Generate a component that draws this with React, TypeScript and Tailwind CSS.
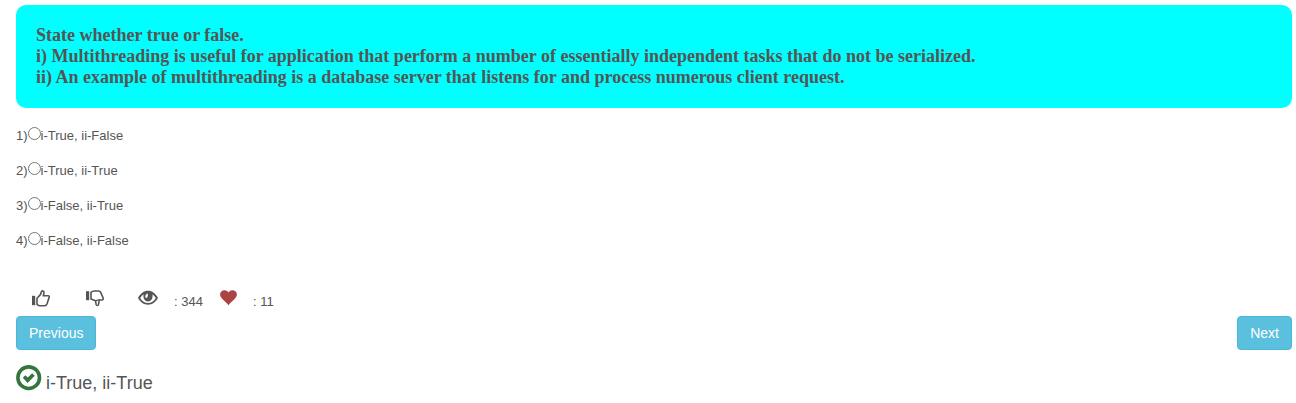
import React, { useState } from "react";

const options = ["i-True, ii-False", "i-True, ii-True", "i-False, ii-True", "i-False, ii-False"];

function ThumbUp() {
  return (
    <svg width="18" height="17" viewBox="0 0 18 17" fill="none" aria-hidden="true">
      <path d="M0 5.8h3.2v9.4H0z" fill="#555" />
      <path
        d="M5 8.2 8.4 4.600 9.600 1.400C10.200.5 12 .9 12 2.400c0 1.200-.5 2.200-.7 3.400h4.900c1.100 0 1.300 1.100.8 1.900l-1.900 6.100c-.5 1.400-1.200 2-2.700 2H8C6.800 15.800 5.900 15.200 5 14.400z"
        stroke="#555"
        strokeWidth="1.6"
        strokeLinejoin="round"
      />
    </svg>
  );
}

function ThumbDown() {
  return (
    <svg width="18" height="17" viewBox="0 0 18 17" fill="none" aria-hidden="true">
      <path d="M0 1.200h3.200v9H0z" fill="#555" />
      <path
        d="M5 2.400C6 1.400 7 1 8.200 1h4.200c1.100 0 1.800.4 2.300 1.400l2.200 4.900c.6 1.300.3 2.700-1.100 2.700h-2.600l-.6 4.200c-.3 1.700-2.100 1.700-2.500.2L9.500 10.700 5 8.900z"
        stroke="#555"
        strokeWidth="1.6"
        strokeLinejoin="round"
      />
      <path d="m9.600 10.700 3.500-.8" stroke="#555" strokeWidth="1.2" />
    </svg>
  );
}

function Eye() {
  return (
    <svg width="20" height="16" viewBox="0 0 20 16" fill="none" aria-hidden="true">
      <path
        fillRule="evenodd"
        d="M0 8C2.400 3.500 5.800.8 10 .8S17.600 3.500 20 8c-2.400 4.300-5.800 6.700-10 6.700S2.400 12.300 0 8zm2.200 0c1.900 3.200 4.500 5 7.800 5s5.900-1.800 7.800-5c-.9-1.500-2-2.800-3.300-3.700C15 8.500 13.200 11.500 10 11.500S5 8.500 5.500 4.300C4.200 5.200 3.100 6.500 2.200 8z"
        fill="#555"
      />
      <path d="M7.200 6.900c0-1.900.8-3.100 2.400-3.500.6 1.500.3 3.100-.5 4.100-.7.800-1.600.6-1.900-.6z" fill="#fff" />
    </svg>
  );
}

function Heart() {
  return (
    <svg width="17" height="16" viewBox="0 0 17 16" aria-hidden="true">
      <path d="M8.500 2.500C9.500.9 10.900.2 12.500.2c2.500 0 4.400 1.900 4.400 4.300 0 3.500-4.600 6-8.400 10.700C4.700 10.500.1 8 .1 4.500.1 2.100 2 .2 4.500.2 6.100.2 7.500.9 8.500 2.500z" fill="#a94442" />
    </svg>
  );
}

function CheckCircle() {
  return (
    <svg className="shrink-0" width="26" height="26" viewBox="0 0 26 26" fill="none" aria-hidden="true">
      <circle cx="12.700" cy="12.700" r="10.800" stroke="#35763e" strokeWidth="3.600" />
      <path d="m6.800 12.800 2.500-2.500 2.500 2.200 4.300-4.300 2.700 2.600-7.200 7.100z" fill="#35763e" />
    </svg>
  );
}

const buttonStyle = "rounded border border-[#46b8da] bg-[#5bc0de] px-3 py-1.5 text-sm leading-5 text-white";

export default function App() {
  const [choice, setChoice] = useState<number | null>(null);

  return (
    <main className="bg-white pt-[5px] pr-1 pl-4 font-['Liberation_Sans',Arial,sans-serif] text-[13px] text-[#555]">
      <h1 className="rounded-[10px] bg-[#00ffff] p-5 font-['Liberation_Serif','Times_New_Roman',serif] text-lg leading-[21px] font-bold">
        State whether true or false.
        <br />
        i) Multithreading is useful for application that perform a number of essentially independent tasks that do not be serialized.
        <br />
        ii) An example of multithreading is a database server that listens for and process numerous client request.
      </h1>

      <div className="flex flex-col pt-[10px]">
        {options.map((option, index) => (
          <label key={option} className="flex h-[35px] items-center">
            <span>{index + 1})</span>
            <input
              type="radio"
              name="answer"
              className="mb-1 size-[13px] shrink-0"
              checked={choice === index}
              onChange={() => setChoice(index)}
            />
            <span>{option}</span>
          </label>
        ))}
      </div>

      <div className="flex items-start pt-8 pl-4">
        <button type="button" aria-label="Like" className="mr-9">
          <ThumbUp />
        </button>
        <button type="button" aria-label="Dislike" className="mr-[34px]">
          <ThumbDown />
        </button>
        <Eye />
        <span className="pt-1 pl-4 leading-4">: 344</span>
        <span className="pl-[17px]">
          <Heart />
        </span>
        <span className="pt-1 pl-4 leading-4">: 11</span>
      </div>

      <nav className="flex justify-between pt-1.5">
        <button type="button" className={buttonStyle}>
          Previous
        </button>
        <button type="button" className={buttonStyle}>
          Next
        </button>
      </nav>

      <div className="flex items-start gap-1 pt-[15px]">
        <CheckCircle />
        <span className="pt-2 text-lg leading-5">i-True, ii-True</span>
      </div>
    </main>
  );
}
